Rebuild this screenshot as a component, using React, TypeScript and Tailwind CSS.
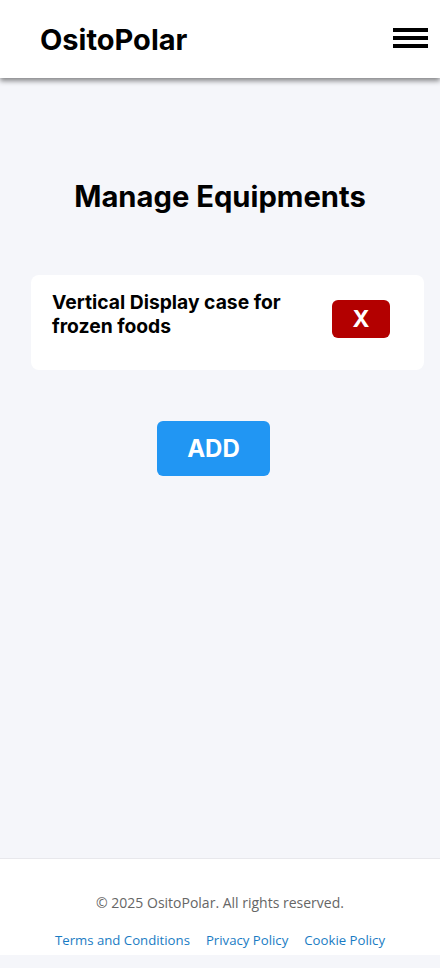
export default function App() {
  return (
    <div className="min-h-[968px] bg-[#f5f6fa] flex flex-col" style={{ fontFamily: "Inter, 'Liberation Sans', sans-serif" }}>
      <header className="h-[78px] bg-white flex items-center justify-between pl-10 pr-[12px] shadow-[0_3px_5px_rgba(0,0,0,0.45)] relative z-10">
        <h1 className="text-[29px] font-bold text-black mt-[2px]">OsitoPolar</h1>
        <button className="flex flex-col gap-[4px] w-[35px] -mt-[2px]">
          <span className="block h-[4px] bg-black" />
          <span className="block h-[4px] bg-black" />
          <span className="block h-[4px] bg-black" />
        </button>
      </header>

      <main className="flex-1 flex flex-col">
        <h2 className="text-center text-[29.2px] font-bold text-black mt-[101px] leading-[36px]">
          Manage Equipments
        </h2>

        <div className="ml-[31px] mr-[16px] mt-[60px] h-[95px] bg-white rounded-[8px] flex items-start justify-between pl-[21px] pr-[34px] pt-[15px]">
          <p className="text-[19.3px] font-bold text-black leading-[24px] w-[255px]">
            Vertical Display case for frozen foods
          </p>
          <button className="mt-[10px] w-[58px] h-[38px] bg-[#b30000] rounded-[6px] text-white text-[23px] font-bold">
            X
          </button>
        </div>

        <div className="flex justify-center mt-[51px] pr-[13px]">
          <button className="w-[113px] h-[55px] bg-[#2196f3] rounded-[6px] text-white text-[24px] font-bold">
            ADD
          </button>
        </div>
      </main>

      <footer className="bg-white border-t border-[#e8e8ec] h-[97px] mb-[13px] flex flex-col items-center pt-[35px]" style={{ fontFamily: "'Open Sans', sans-serif" }}>
        <p className="text-[14px] text-[#666] leading-[18px]">© 2025 OsitoPolar. All rights reserved.</p>
        <div className="flex gap-[16px] mt-[19px] text-[13.2px] text-[#1a7cc4] leading-[18px]">
          <a>Terms and Conditions</a>
          <a>Privacy Policy</a>
          <a>Cookie Policy</a>
        </div>
      </footer>
    </div>
  );
}
